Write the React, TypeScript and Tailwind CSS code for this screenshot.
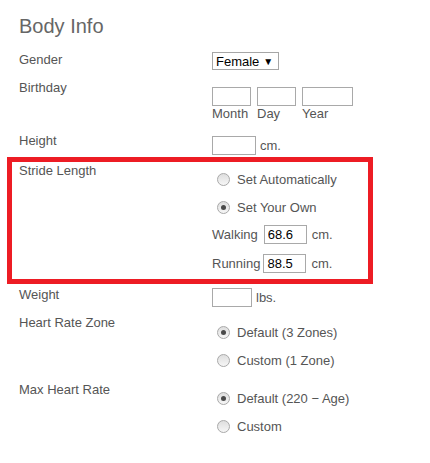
import React from 'react';

function Radio({ checked, label }: { checked?: boolean; label: string }) {
  return (
    <div className="flex h-[15px] items-center">
      <span className="ml-[5px] mr-[7px] flex h-[13px] w-[13px] items-center justify-center rounded-full border border-[#a9a9a9] bg-gradient-to-b from-[#dedede] to-[#f6f6f6]">
        {checked && <span className="h-[5px] w-[5px] rounded-full bg-[#4a4a4a]" />}
      </span>
      <span>{label}</span>
    </div>
  );
}

function Box({ w, value }: { w: string; value?: string }) {
  return (
    <input
      readOnly
      value={value ?? ''}
      className={`${w} h-[19px] border border-[#a9a9a9] bg-white pl-[3px] text-[13px] leading-[15px] text-black outline-none`}
    />
  );
}

function Label({ children }: { children: React.ReactNode }) {
  return <div className="w-[193px] shrink-0 leading-[15px]">{children}</div>;
}

export default function App() {
  return (
    <div className="min-h-screen bg-white font-['Liberation_Sans',Arial,sans-serif] text-[13px] leading-[15px] text-[#555]">
      <h1 className="mt-[14px] h-[24px] pl-[19px] text-[20px] leading-[24px] text-[#666]">Body Info</h1>

      <div className="mt-[14px] flex pl-[19px]">
        <Label>Gender</Label>
        <div className="flex h-[18px] w-[67px] items-center border border-[#a6a6a6] pl-[3px] text-black">
          <span>Female</span>
          <span className="ml-[4px] text-[10px]">▼</span>
        </div>
      </div>

      <div className="mt-[10px] flex pl-[19px]">
        <Label>Birthday</Label>
        <div className="flex gap-[6px] pt-[7px]">
          <div className="flex flex-col">
            <Box w="w-[39px]" />
            <span>Month</span>
          </div>
          <div className="flex flex-col">
            <Box w="w-[39px]" />
            <span>Day</span>
          </div>
          <div className="flex flex-col">
            <Box w="w-[51px]" />
            <span>Year</span>
          </div>
        </div>
      </div>

      <div className="mt-[12px] flex pl-[19px]">
        <Label>Height</Label>
        <div className="flex items-center gap-[4px] pt-[3px]">
          <Box w="w-[44px]" />
          <span>cm.</span>
        </div>
      </div>

      <div className="ml-[7px] mt-[2px] flex w-[366px] border-[5px] border-[#ed1c24] pb-[6px] pl-[7px] pt-[1px]">
        <Label>Stride Length</Label>
        <div className="flex flex-col pt-[9px]">
          <Radio label="Set Automatically" />
          <div className="mt-[13px]">
            <Radio checked label="Set Your Own" />
          </div>
          <div className="mt-[10px] flex items-center">
            <span>Walking</span>
            <span className="ml-[6px]">
              <Box w="w-[43px]" value="68.6" />
            </span>
            <span className="ml-[5px]">cm.</span>
          </div>
          <div className="mt-[10px] flex items-center">
            <span>Running</span>
            <span className="ml-[3px]">
              <Box w="w-[43px]" value="88.5" />
            </span>
            <span className="ml-[5px]">cm.</span>
          </div>
        </div>
      </div>

      <div className="mt-[3px] flex pl-[19px]">
        <Label>Weight</Label>
        <div className="flex items-center gap-[4px] pt-[1px]">
          <Box w="w-[40px]" />
          <span>lbs.</span>
        </div>
      </div>

      <div className="mt-[8px] flex pl-[19px]">
        <Label>Heart Rate Zone</Label>
        <div className="flex flex-col gap-[13px] pt-[10px]">
          <Radio checked label="Default (3 Zones)" />
          <Radio label="Custom (1 Zone)" />
        </div>
      </div>

      <div className="mt-[14px] flex pl-[19px]">
        <Label>Max Heart Rate</Label>
        <div className="flex flex-col gap-[13px] pt-[9px]">
          <Radio checked label="Default (220 − Age)" />
          <Radio label="Custom" />
        </div>
      </div>
    </div>
  );
}
